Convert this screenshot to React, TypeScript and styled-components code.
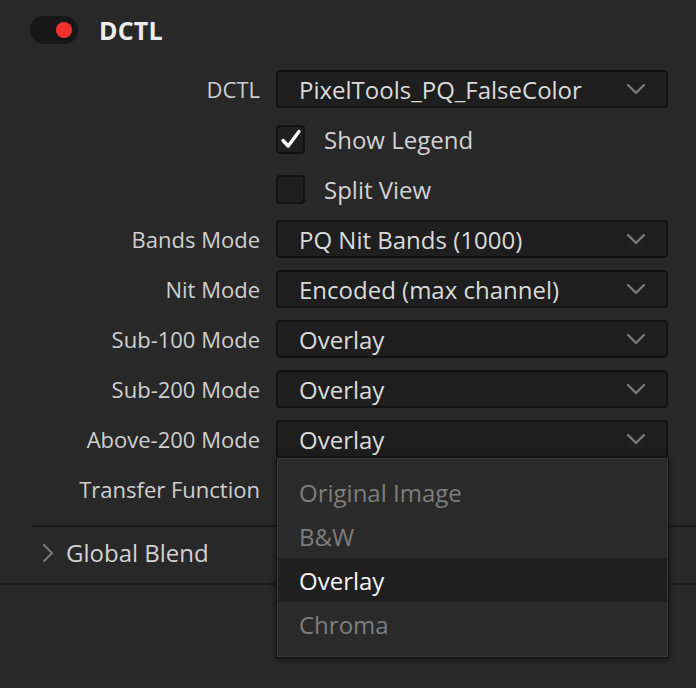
import React from 'react'
import styled, { createGlobalStyle } from 'styled-components'

const GlobalStyle = createGlobalStyle`
  html, body {
    margin: 0;
    background: #282828;
  }
  body {
    font-family: 'Open Sans', 'Liberation Sans', sans-serif;
    color: #d2d2d2;
  }
`

const Panel = styled.div`
  width: 696px;
  height: 688px;
  overflow: hidden;
  background: #282828;
`

const Header = styled.div`
  display: flex;
  align-items: center;
  height: 60px;
  padding-left: 30px;
  gap: 21px;
`

const Toggle = styled.div`
  position: relative;
  width: 48px;
  height: 28px;
  border-radius: 14px;
  background: #171717;

  &::after {
    content: '';
    position: absolute;
    top: 6px;
    right: 6px;
    width: 16px;
    height: 16px;
    border-radius: 50%;
    background: #f2302d;
  }
`

const Title = styled.h1`
  margin: 0;
  font-size: 25px;
  font-weight: 700;
  color: #ececec;
  letter-spacing: 0.2px;
`

const Form = styled.div`
  display: grid;
  grid-template-columns: 260px 392px;
  grid-auto-rows: 38px;
  column-gap: 16px;
  row-gap: 12px;
  margin-top: 10px;
`

const Label = styled.div`
  display: flex;
  align-items: center;
  justify-content: flex-end;
  font-size: 22px;
  color: #cfcfcf;
`

const SelectWrap = styled.div`
  position: relative;
`

const SelectBox = styled.div`
  box-sizing: border-box;
  height: 38px;
  display: flex;
  align-items: center;
  justify-content: space-between;
  padding: 0 20px 0 21px;
  background: #1e1e1e;
  border: 2px solid #121212;
  border-radius: 4px;
  font-size: 24px;
  color: #dadada;
`

const CheckRow = styled.label`
  display: flex;
  align-items: center;
  gap: 19px;
  font-size: 24px;
  color: #d2d2d2;
`

const Box = styled.span`
  box-sizing: border-box;
  width: 29px;
  height: 29px;
  display: flex;
  align-items: center;
  justify-content: center;
  background: #1f1f1f;
  border: 2px solid #121212;
  border-radius: 4px;
`

const Menu = styled.div`
  position: absolute;
  top: calc(100% - 1px);
  left: 0;
  right: -1px;
  z-index: 2;
  padding: 12px 1px 11px;
  background: #2a2a2a;
  border: 1px solid #141414;
  box-shadow: inset 0 0 0 1px #3a3a3a, 0 2px 6px rgba(0, 0, 0, 0.5);
`

const MenuItem = styled.div<{ $active?: boolean }>`
  height: 44px;
  display: flex;
  align-items: center;
  padding-left: 21px;
  font-size: 24px;
  color: ${p => (p.$active ? '#f4f4f4' : '#7d7d7d')};
  background: ${p => (p.$active ? '#1f1f1f' : 'transparent')};
`

const Section = styled.div`
  margin-top: 17px;
`

const Divider = styled.div<{ $inset?: number }>`
  height: 2px;
  margin-left: ${p => p.$inset ?? 0}px;
  background: #1c1c1c;
`

const Disclosure = styled.div`
  display: flex;
  align-items: center;
  gap: 11px;
  height: 56px;
  padding-left: 41px;
  padding-bottom: 5px;
  box-sizing: border-box;
  font-size: 24px;
  color: #d2d2d2;
`

const Chevron = () => (
  <svg width="20" height="12" viewBox="0 0 20 12" fill="none">
    <path d="M2 2l8 8 8-8" stroke="#7a7a7a" strokeWidth="2.4" strokeLinecap="round" strokeLinejoin="round" />
  </svg>
)

const ChevronRight = () => (
  <svg width="14" height="20" viewBox="0 0 14 20" fill="none">
    <path d="M3 2l8 8-8 8" stroke="#777" strokeWidth="2.2" strokeLinecap="round" strokeLinejoin="round" />
  </svg>
)

const Check = () => (
  <svg width="22" height="22" viewBox="0 0 22 22" fill="none">
    <path d="M3 12.5l5.2 5.5L19 3.5" stroke="#fff" strokeWidth="3.4" strokeLinecap="round" strokeLinejoin="round" />
  </svg>
)

const Select: React.FC<{ value?: string; children?: React.ReactNode }> = ({ value, children }) => (
  <SelectWrap>
    <SelectBox>
      <span>{value}</span>
      <Chevron />
    </SelectBox>
    {children}
  </SelectWrap>
)

const modes = ['Original Image', 'B&W', 'Overlay', 'Chroma']

export default function App() {
  return (
    <Panel>
      <GlobalStyle />
      <Header>
        <Toggle />
        <Title>DCTL</Title>
      </Header>

      <Form>
        <Label>DCTL</Label>
        <Select value="PixelTools_PQ_FalseColor" />

        <div />
        <CheckRow>
          <Box>
            <Check />
          </Box>
          Show Legend
        </CheckRow>

        <div />
        <CheckRow>
          <Box />
          Split View
        </CheckRow>

        <Label>Bands Mode</Label>
        <Select value="PQ Nit Bands (1000)" />

        <Label>Nit Mode</Label>
        <Select value="Encoded (max channel)" />

        <Label>Sub-100 Mode</Label>
        <Select value="Overlay" />

        <Label>Sub-200 Mode</Label>
        <Select value="Overlay" />

        <Label>Above-200 Mode</Label>
        <Select value="Overlay">
          <Menu>
            {modes.map(m => (
              <MenuItem key={m} $active={m === 'Overlay'}>
                {m}
              </MenuItem>
            ))}
          </Menu>
        </Select>

        {/* value sits under the open menu */}
        <Label>Transfer Function</Label>
        <Select />
      </Form>

      <Section>
        <Divider $inset={32} />
        <Disclosure>
          <ChevronRight />
          Global Blend
        </Disclosure>
        <Divider />
      </Section>
    </Panel>
  )
}
